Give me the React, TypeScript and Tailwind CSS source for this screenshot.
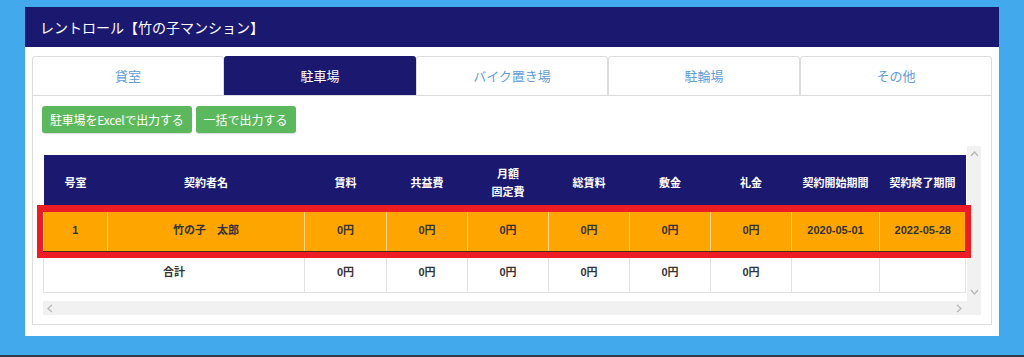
import React from "react";

const font = '"Liberation Sans", "Noto Sans CJK JP", sans-serif';
const jp = '"Noto Sans CJK JP", "Liberation Sans", sans-serif';

const cols = [64, 197, 82, 81, 81, 81, 81, 81, 88, 86];

const Chevron = ({ dir }: { dir: "up" | "down" | "left" | "right" }) => {
  const pts =
    dir === "up"
      ? "1,6 4.5,2 8,6"
      : dir === "down"
      ? "1,2 4.5,6 8,2"
      : dir === "left"
      ? "6,1 2,4.5 6,8"
      : "2,1 6,4.5 2,8";
  return (
    <svg width="9" height="9" viewBox="0 0 9 9">
      <polyline points={pts} fill="none" stroke="#b5b5b5" strokeWidth="1.2" />
    </svg>
  );
};

export default function App() {
  const tabs = ["貸室", "駐車場", "バイク置き場", "駐輪場", "その他"];
  const headers: React.ReactNode[] = [
    "号室",
    "契約者名",
    "賃料",
    "共益費",
    (
      <>
        月額
        <br />
        固定費
      </>
    ),
    "総賃料",
    "敷金",
    "礼金",
    "契約開始期間",
    "契約終了期間",
  ];
  const row = ["1", "竹の子　太郎", "0円", "0円", "0円", "0円", "0円", "0円", "2020-05-01", "2022-05-28"];
  const total = ["0円", "0円", "0円", "0円", "0円", "0円", "", ""];

  return (
    <div className="w-[1024px] h-[357px] bg-[#42a9ec] flex flex-col" style={{ fontFamily: jp }}>
      <div className="mt-[7px] mx-[25px] h-[329px] bg-white flex flex-col">
        <div className="h-[40px] bg-[#1b196f] flex items-center pl-[15px] text-white text-[14px]">
          レントロール【竹の子マンション】
        </div>
        <div className="px-[7px] pt-[9px] flex flex-col">
          <div className="grid grid-cols-5 h-[39px]">
            {tabs.map((t, i) =>
              i === 1 ? (
                <div
                  key={t}
                  className="bg-[#1b196f] text-white text-[13px] flex items-center justify-center rounded-t-[3px]"
                >
                  {t}
                </div>
              ) : (
                <div
                  key={t}
                  className="border border-b-0 border-[#dcdcdc] rounded-t-[4px] text-[#5f9cd8] text-[13px] flex items-center justify-center bg-white"
                >
                  {t}
                </div>
              )
            )}
          </div>
          <div className="h-[230px] border border-[#dcdcdc] px-[10px] pt-[10px] flex flex-col">
            <div className="flex gap-[4px] -ml-px">
              <button className="h-[27px] px-[8px] bg-[#5cb85c] text-white text-[12px] tracking-[-0.2px] rounded-[3px] shadow-[0_1px_1px_rgba(0,0,0,0.15)]">
                駐車場をExcelで出力する
              </button>
              <button className="h-[27px] px-[8px] bg-[#5cb85c] text-white text-[12px] rounded-[3px] shadow-[0_1px_1px_rgba(0,0,0,0.15)]">
                一括で出力する
              </button>
            </div>
            <div className="mt-[13px] h-[169px] flex">
              <div className="w-[925px] flex flex-col">
                <div className="pt-[9px] relative">
                  <table
                    className="border-collapse table-fixed font-bold text-[11px]"
                    style={{ width: 922, fontFamily: font }}
                  >
                    <colgroup>
                      {cols.map((w, i) => (
                        <col key={i} style={{ width: w }} />
                      ))}
                    </colgroup>
                    <thead>
                      <tr className="h-[55px] bg-[#1b196f] text-white">
                        {headers.map((h, i) => (
                          <th key={i} className="text-center font-bold leading-[18px] p-0">
                            {h}
                          </th>
                        ))}
                      </tr>
                    </thead>
                    <tbody>
                      <tr className="h-[42px] bg-[#ffa500] text-[#333] border-b-2 border-[#4a2c10]">
                        {row.map((c, i) => (
                          <td
                            key={i}
                            className={`text-center p-0 ${i > 0 ? "border-l border-[#ffd58a]" : ""}`}
                          >
                            {c}
                          </td>
                        ))}
                      </tr>
                      <tr className="h-[40px] bg-white text-[#333]">
                        <td colSpan={2} className="text-center p-0 border border-[#e3e3e3]">
                          合計
                        </td>
                        {total.map((c, i) => (
                          <td key={i} className="text-center p-0 border border-[#e3e3e3]">
                            {c}
                          </td>
                        ))}
                      </tr>
                    </tbody>
                  </table>
                  <div className="absolute left-[-6px] top-[59px] w-[934px] h-[53px] border-[6px] border-t-[7px] border-[#ed1c24] pointer-events-none" />
                </div>
                <div className="mt-auto h-[14px] bg-[#f1f1f1] flex items-center justify-between px-[3px]">
                  <Chevron dir="left" />
                  <Chevron dir="right" />
                </div>
              </div>
              <div className="w-[14px] bg-[#f1f1f1] flex flex-col items-center pt-[4px]">
                <Chevron dir="up" />
                <div className="mt-auto mb-[18px]">
                  <Chevron dir="down" />
                </div>
              </div>
            </div>
          </div>
        </div>
      </div>
      <div className="mt-auto h-[2px] bg-[#2f3b48]" />
    </div>
  );
}
